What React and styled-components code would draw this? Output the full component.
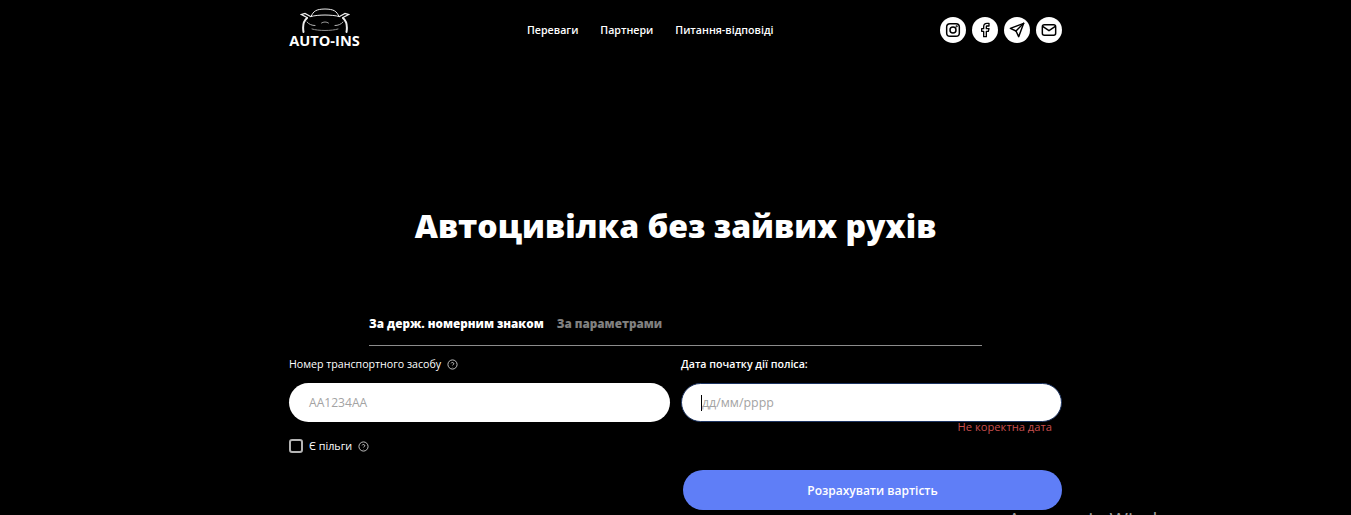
import React from "react";
import styled, { createGlobalStyle } from "styled-components";

const GlobalStyle = createGlobalStyle`
  html, body {
    margin: 0;
    height: 515px;
    overflow: hidden;
    background: #000;
  }
  body {
    font-family: "Open Sans", sans-serif;
  }
`;

const Root = styled.div`
  position: relative;
  height: 515px;
  overflow: hidden;
`;

const Page = styled.div`
  width: 773px;
  margin: 0 auto;
  color: #fff;
`;

const Header = styled.header`
  display: flex;
  align-items: flex-start;
  height: 60px;
  padding-top: 8px;
  box-sizing: border-box;
`;

const Logo = styled.a`
  width: 71px;
  display: flex;
  flex-direction: column;
  align-items: center;
  font-size: 14.6px;
  font-weight: 700;
  line-height: 15px;
  color: #fff;
  white-space: nowrap;
`;

const Nav = styled.nav`
  display: flex;
  gap: 22px;
  margin-left: 167px;
  padding-top: 14px;
  font-size: 10.65px;
  font-weight: 600;
  line-height: 16px;
`;

const Socials = styled.div`
  display: flex;
  gap: 6px;
  margin-left: auto;
  padding-top: 9px;
`;

const Social = styled.a`
  width: 26px;
  height: 26px;
  border-radius: 50%;
  background: #fff;
  color: #000;
  display: flex;
  align-items: center;
  justify-content: center;
`;

const Title = styled.h1`
  margin: 142px 0 0;
  font-size: 32px;
  line-height: 48px;
  font-weight: 800;
  text-align: center;
`;

const Tabs = styled.div`
  display: flex;
  gap: 13px;
  margin: 61px 80px 0;
  height: 35px;
  padding-top: 4px;
  box-sizing: border-box;
  border-bottom: 1px solid #8c8c8c;
`;

const Tab = styled.span`
  font-size: 11.7px;
  font-weight: 800;
  line-height: 16px;
  color: ${(p) => (p.$active ? "#fff" : "#808080")};
`;

const FormGrid = styled.div`
  display: grid;
  grid-template-columns: 381px 381px;
  column-gap: 11px;
  margin-top: 10px;
`;

const Field = styled.div`
  display: flex;
  flex-direction: column;
`;

const Label = styled.label`
  display: flex;
  align-items: center;
  gap: 6px;
  height: 16px;
  font-size: 10.65px;
  font-weight: ${(p) => (p.$bold ? 600 : 400)};
  line-height: 16px;
  white-space: nowrap;
`;

const Input = styled.div`
  height: 39px;
  margin-top: 11px;
  padding-left: ${(p) => (p.$focused ? "19px" : "20px")};
  border-radius: 20px;
  background: #fff;
  box-sizing: border-box;
  display: flex;
  align-items: center;
  font-size: ${(p) => (p.$focused ? "12.4px" : "12.1px")};
  color: #a3a3a3;
  ${(p) => p.$focused && "border: 1px solid #1d3461;"}
`;

const Caret = styled.span`
  width: 1px;
  height: 16px;
  background: #000;
`;

const ErrorText = styled.div`
  align-self: flex-end;
  margin: -3px 10px 0 0;
  font-size: 11.2px;
  line-height: 15px;
  color: #c94f4f;
`;

const Benefit = styled.div`
  display: flex;
  align-items: center;
  gap: 6px;
  margin-top: 16px;
  font-size: 10.8px;
  line-height: 16px;
`;

const Checkbox = styled.span`
  width: 14px;
  height: 14px;
  box-sizing: border-box;
  border: 2px solid #b4b4b4;
  border-radius: 3px;
`;

const Submit = styled.button`
  width: 379px;
  height: 40px;
  margin: 36px 0 0 2px;
  border: 0;
  border-radius: 20px;
  background: #5f7ef7;
  color: #fff;
  font-family: inherit;
  font-size: 12px;
  font-weight: 600;
`;

// watermark over the page, only the tops of the letters fit in the window
const Watermark = styled.div`
  position: absolute;
  left: 1008px;
  top: 506px;
  font-family: "Open Sans", sans-serif;
  font-size: 20px;
  line-height: 27px;
  color: #9a9a9a;
  white-space: nowrap;
`;

const Help = () => (
  <svg width="11" height="11" viewBox="0 0 24 24" fill="none" stroke="#d0d0d0" strokeWidth="2">
    <circle cx="12" cy="12" r="10" />
    <path d="M9 9.5a3 3 0 0 1 5.8 1c0 2-2.8 2-2.8 3.5M12 17.5v.5" />
  </svg>
);

const CarLogo = () => (
  <svg width="50" height="25" viewBox="0 0 50 25" fill="none" stroke="#ededed" strokeWidth="1" strokeLinecap="round">
    <path d="M11 8.5 C13.5 3 16 1.2 25 1 C34 1.2 36.5 3 39 8.5" />
    <path d="M11 8.5 C18 6.5 32 6.5 39 8.5" />
    <path d="M10.5 8.5 L5 5.5 L1.5 6.5 L7 9.5" strokeWidth="1.3" />
    <path d="M39.5 8.5 L45 5.5 L48.5 6.5 L43 9.5" strokeWidth="1.3" />
    <path d="M7 10 C3.5 13 2.5 18 3.5 24" strokeWidth="2" />
    <path d="M43 10 C46.5 13 47.5 18 46.5 24" strokeWidth="2" />
    <path d="M7 14 C9 16.5 12 17.5 15 17.5" stroke="#b5b5b5" />
    <path d="M43 14 C41 16.5 38 17.5 35 17.5" stroke="#b5b5b5" />
    <path d="M21.5 15 C23.5 13.6 26.5 13.6 28.5 15" stroke="#999" />
    <path d="M12 21 C18 23 32 23 38 21" stroke="#8a8a8a" />
  </svg>
);

const Instagram = () => (
  <svg width="16" height="16" viewBox="0 0 24 24" fill="none" stroke="currentColor" strokeWidth="2.2">
    <rect x="2.5" y="2.5" width="19" height="19" rx="5" />
    <circle cx="12" cy="12" r="4.5" />
    <circle cx="17.5" cy="6.5" r="0.6" fill="currentColor" />
  </svg>
);

const Facebook = () => (
  <svg width="16" height="16" viewBox="0 0 24 24" fill="none" stroke="currentColor" strokeWidth="2" strokeLinejoin="round">
    <path d="M18 2h-3a5 5 0 0 0-5 5v3H7v4h3v8h4v-8h3l1-4h-4V7a1 1 0 0 1 1-1h3z" />
  </svg>
);

const Send = () => (
  <svg width="16" height="16" viewBox="0 0 24 24" fill="none" stroke="currentColor" strokeWidth="2.2" strokeLinejoin="round" strokeLinecap="round">
    <path d="M22 2 2 9.5l8.5 4L14.5 22z" />
    <path d="M22 2 10.5 13.5" />
  </svg>
);

const Mail = () => (
  <svg width="16" height="16" viewBox="0 0 24 24" fill="none" stroke="currentColor" strokeWidth="2.2" strokeLinejoin="round">
    <rect x="2" y="4" width="20" height="16" rx="3" />
    <path d="M2.5 6.5 12 13l9.5-6.5" />
  </svg>
);

export default function App() {
  return (
    <Root>
      <GlobalStyle />
      <Page>
        <Header>
          <Logo>
            <CarLogo />
            AUTO-INS
          </Logo>
          <Nav>
            <span>Переваги</span>
            <span>Партнери</span>
            <span>Питання-відповіді</span>
          </Nav>
          <Socials>
            <Social><Instagram /></Social>
            <Social><Facebook /></Social>
            <Social><Send /></Social>
            <Social><Mail /></Social>
          </Socials>
        </Header>

        <Title>Автоцивілка без зайвих рухів</Title>

        <Tabs>
          <Tab $active>За держ. номерним знаком</Tab>
          <Tab>За параметрами</Tab>
        </Tabs>

        <FormGrid>
          <Field>
            <Label>Номер транспортного засобу <Help /></Label>
            <Input>AA1234AA</Input>
            <Benefit>
              <Checkbox />
              Є пільги
              <Help />
            </Benefit>
          </Field>
          <Field>
            <Label $bold>Дата початку дії поліса:</Label>
            <Input $focused><Caret />дд/мм/рррр</Input>
            <ErrorText>Не коректна дата</ErrorText>
            <Submit>Розрахувати вартість</Submit>
          </Field>
        </FormGrid>
      </Page>
      <Watermark>Активація Windows</Watermark>
    </Root>
  );
}
